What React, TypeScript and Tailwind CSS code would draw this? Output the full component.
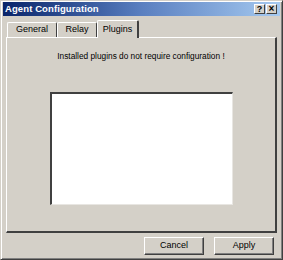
import React from 'react'

const font = { fontFamily: '"Liberation Sans", Arial, sans-serif' }

function TitleButton({ children }: { children: React.ReactNode }) {
  return (
    <div className="w-[11px] h-[10px] bg-[#d4d0c8] flex items-center justify-center text-[9px] font-bold leading-none text-black border-t border-l border-white border-r border-b border-r-[#404040] border-b-[#404040]">
      {children}
    </div>
  )
}

function Tab({ label, active, width }: { label: string; active?: boolean; width: string }) {
  return (
    <div
      className={
        active
          ? `${width} h-[18px] -mb-px relative z-10 bg-[#d4d0c8] border-t border-l border-white border-r-2 border-r-[#404040] rounded-t-[2px] flex items-center justify-center text-[9px] text-black`
          : `${width} h-[15px] mt-[3px] bg-[#d4d0c8] border-t border-l border-white border-r border-r-[#404040] rounded-t-[2px] flex items-center justify-center text-[9px] text-black`
      }
    >
      {label}
    </div>
  )
}

function Button({ label }: { label: string }) {
  return (
    <div className="w-[60px] h-[18px] bg-[#d4d0c8] border border-t-white border-l-white border-r-[#404040] border-b-[#404040] shadow-[inset_-1px_-1px_0_#808080] flex items-center justify-center text-[9px] text-black">
      {label}
    </div>
  )
}

export default function App() {
  return (
    <div
      className="w-[283px] h-[260px] bg-[#d4d0c8] border border-t-[#d4d0c8] border-l-[#d4d0c8] border-r-[#404040] border-b-[#404040] shadow-[inset_1px_1px_0_#fff,inset_-1px_-1px_0_#808080] flex flex-col p-[2px] overflow-hidden"
      style={font}
    >
      <div className="h-[14px] -mt-[1px] shrink-0 bg-gradient-to-r from-[#0a246a] via-[#5a7fc0] to-[#a6caf0] flex items-center justify-between pl-[2px] pr-[3px]">
        <span className="text-white font-bold text-[9.5px] tracking-[0.1px] leading-none">Agent Configuration</span>
        <div className="flex items-center">
          <TitleButton>?</TitleButton>
          <div className="w-[1px]" />
          <TitleButton>
            <span className="text-[10px]">×</span>
          </TitleButton>
        </div>
      </div>

      <div className="flex flex-col px-[3px] pt-[3px] flex-1">
        <div className="flex items-end pl-[1px] h-[18px]">
          <Tab label="General" width="w-[50px]" />
          <Tab label="Relay" width="w-[40px]" />
          <Tab label="Plugins" active width="w-[42px]" />
        </div>
        <div className="h-[196px] border-t border-l border-white border-r-2 border-b-2 border-r-[#404040] border-b-[#404040] flex flex-col items-center">
          <div className="mt-[14px] text-[8.3px] text-black leading-none">Installed plugins do not require configuration !</div>
          <div className="mt-[32px] w-[183px] h-[113px] bg-white border-t-2 border-l-2 border-t-[#404040] border-l-[#404040] border-b border-r border-b-[#e8e6e2] border-r-[#e8e6e2]" />
        </div>
        <div className="flex justify-end gap-[10px] pt-[4px] pr-[3px]">
          <Button label="Cancel" />
          <Button label="Apply" />
        </div>
      </div>
    </div>
  )
}
